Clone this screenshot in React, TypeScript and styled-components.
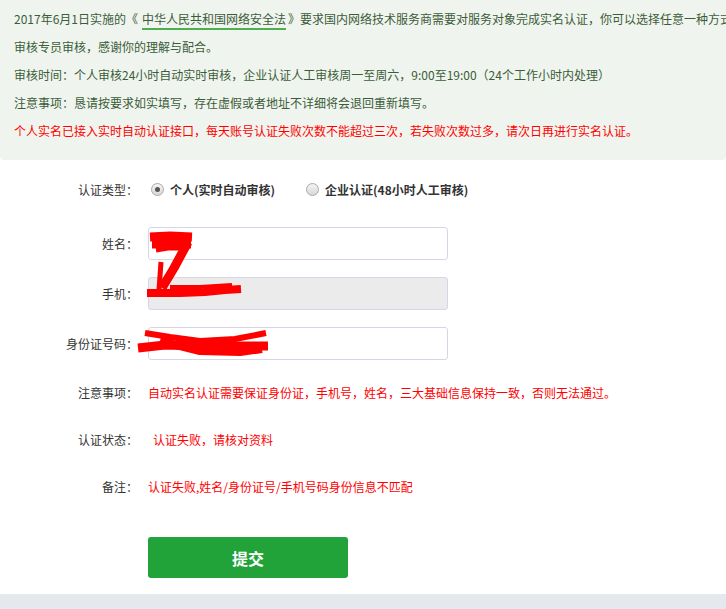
import React from 'react';
import styled, { createGlobalStyle } from 'styled-components';

const GlobalStyle = createGlobalStyle`
  html, body {
    margin: 0;
    padding: 0;
    background: #ffffff;
    overflow: hidden;
  }
  body {
    font-family: "Noto Sans CJK SC", "Liberation Sans", sans-serif;
  }
`

/**********************************
  Styled Components
**********************************/
const Page = styled.div`
  position: relative;
  width: 726px;
  min-height: 609px;
  display: flex;
  flex-direction: column;
`

const Notice = styled.div`
  background: #eff5ee;
  border-radius: 0 0 4px 4px;
  padding: 5px 0 15px 14px;
  overflow: hidden;
`

const NoticeLine = styled.div<{ $red?: boolean }>`
  font-size: 12px;
  line-height: 28px;
  height: 28px;
  white-space: nowrap;
  color: ${p => (p.$red ? '#ff0000' : '#3c5c39')};
`

const LawLink = styled.a`
  color: #3c5c39;
  text-decoration: underline;
  text-decoration-color: #4caf50;
  text-decoration-thickness: 2px;
  text-underline-offset: 4px;
  margin: 0 2px 0 4px;
`

const Form = styled.div`
  flex: 1;
  padding: 16px 0 16px 0;
  display: flex;
  flex-direction: column;
`

const Row = styled.div<{ $gap?: number; $h: number }>`
  display: flex;
  align-items: center;
  height: ${p => p.$h}px;
  margin-top: ${p => p.$gap ?? 0}px;
`

const Label = styled.div`
  width: 138px;
  text-align: right;
  font-size: 12px;
  color: #333333;
  flex-shrink: 0;
`

const Field = styled.div`
  margin-left: 10px;
  display: flex;
  align-items: center;
`

const RadioOption = styled.label`
  display: flex;
  align-items: center;
  font-size: 12px;
  font-weight: bold;
  color: #333333;
  margin-left: 3px;
  margin-right: 28px;
`

const RadioDot = styled.span<{ $checked?: boolean }>`
  width: 11px;
  height: 11px;
  border-radius: 50%;
  border: 1px solid #a9a9a9;
  background: linear-gradient(#f4f4f4, #d8d8d8);
  margin-right: 6px;
  display: flex;
  align-items: center;
  justify-content: center;

  &::after {
    content: '';
    width: 5px;
    height: 5px;
    border-radius: 50%;
    background: ${p => (p.$checked ? '#555555' : 'transparent')};
  }
`

const TextInput = styled.div<{ $disabled?: boolean }>`
  width: 298px;
  height: 31px;
  border: 1px solid #d8d5e8;
  border-radius: 3px;
  background: ${p => (p.$disabled ? '#ebebeb' : '#ffffff')};
`

const RedText = styled.div<{ $indent?: number }>`
  font-size: 12px;
  color: #ff0000;
  padding-left: ${p => p.$indent ?? 0}px;
  white-space: nowrap;
`

const SubmitButton = styled.button`
  margin-left: 148px;
  width: 200px;
  height: 41px;
  border: none;
  border-radius: 3px;
  background: #21a33a;
  color: #ffffff;
  font-family: "Noto Sans CJK SC", sans-serif;
  font-size: 16px;
  font-weight: bold;
  cursor: pointer;
`

const FooterBand = styled.div`
  height: 15px;
  background: #e5e8ec;
`

const Scribbles = styled.svg`
  position: absolute;
  left: 0;
  top: 0;
  width: 726px;
  height: 609px;
  pointer-events: none;
`

/**********************************
  Main App
**********************************/
function App() {
  return (
    <Page>
      <GlobalStyle />
      <Notice>
        <NoticeLine>
          2017年6月1日实施的《<LawLink>中华人民共和国网络安全法</LawLink>》要求国内网络技术服务商需要对服务对象完成实名认证，你可以选择任意一种方式进行认证，
        </NoticeLine>
        <NoticeLine>审核专员审核，感谢你的理解与配合。</NoticeLine>
        <NoticeLine>审核时间：个人审核24小时自动实时审核，企业认证人工审核周一至周六，9:00至19:00（24个工作小时内处理）</NoticeLine>
        <NoticeLine>注意事项：恳请按要求如实填写，存在虚假或者地址不详细将会退回重新填写。</NoticeLine>
        <NoticeLine $red>个人实名已接入实时自动认证接口，每天账号认证失败次数不能超过三次，若失败次数过多，请次日再进行实名认证。</NoticeLine>
      </Notice>

      <Form>
        <Row $h={26}>
          <Label>认证类型：</Label>
          <Field>
            <RadioOption><RadioDot $checked />个人(实时自动审核)</RadioOption>
            <RadioOption><RadioDot />企业认证(48小时人工审核)</RadioOption>
          </Field>
        </Row>
        <Row $h={33} $gap={25}>
          <Label>姓名：</Label>
          <Field><TextInput /></Field>
        </Row>
        <Row $h={33} $gap={17}>
          <Label>手机：</Label>
          <Field><TextInput $disabled /></Field>
        </Row>
        <Row $h={33} $gap={17}>
          <Label>身份证号码：</Label>
          <Field><TextInput /></Field>
        </Row>
        <Row $h={20} $gap={22}>
          <Label>注意事项：</Label>
          <Field><RedText>自动实名认证需要保证身份证，手机号，姓名，三大基础信息保持一致，否则无法通过。</RedText></Field>
        </Row>
        <Row $h={20} $gap={27}>
          <Label>认证状态：</Label>
          <Field><RedText $indent={5}>认证失败，请核对资料</RedText></Field>
        </Row>
        <Row $h={20} $gap={27}>
          <Label>备注：</Label>
          <Field><RedText>认证失败,姓名/身份证号/手机号码身份信息不匹配</RedText></Field>
        </Row>
        <Row $h={41} $gap={41}>
          <SubmitButton>提交</SubmitButton>
        </Row>
      </Form>

      <FooterBand />

      <Scribbles viewBox="0 0 726 609">
        <g fill="none" stroke="#ff0000" strokeLinejoin="round" strokeLinecap="butt">
          <path d="M150 237 L170 236 L192 237 M152 244 L175 244 L191 244" strokeWidth="9" />
          <path d="M156 250 L168 248 L186 248" strokeWidth="5" />
          <path d="M188 242 L174 268 L162 288" strokeWidth="9" />
          <path d="M161 262 L159 290" strokeWidth="5" />
          <path d="M147 293 L180 293 L205 292 L225 290 L241 289" strokeWidth="8" />
          <path d="M170 287 L200 287 L232 285" strokeWidth="4" />
          <path d="M145 333 L170 337 L200 341 L235 339 L266 333" strokeWidth="6" />
          <path d="M138 348 L165 345 L200 346 L235 346 L268 346" strokeWidth="9" />
          <path d="M160 341 L200 351 L240 352 L262 349" strokeWidth="8" />
        </g>
      </Scribbles>
    </Page>
  );
}

export default App;
